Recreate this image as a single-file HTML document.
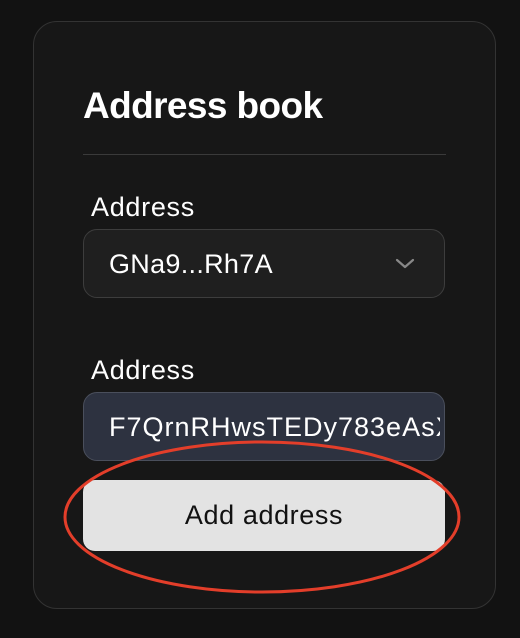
<!DOCTYPE html>
<html><head><style>
html,body{margin:0;padding:0;background:#121212;width:520px;height:638px;overflow:hidden;font-family:"Liberation Sans",sans-serif;}
.card{position:absolute;left:33px;top:21px;width:461px;height:586px;border:1.5px solid #333;border-radius:24px;background:#171717;}
.t{position:absolute;left:83px;top:84px;font-size:37px;font-weight:bold;color:#fff;letter-spacing:-0.6px;line-height:44px;}
.hr{position:absolute;left:83px;top:154px;width:363px;height:1px;background:#3a3a3a;}
.lab{position:absolute;left:91px;font-size:27px;letter-spacing:0.7px;color:#fff;line-height:30px;}
.box{position:absolute;left:83px;width:362px;height:69px;border-radius:14px;box-sizing:border-box;}
.sel{top:229px;background:#1f1f1f;border:1.5px solid #3d3d3d;}
.inp{top:392px;background:#2d3240;border:1.5px solid #4a4f5c;overflow:hidden;}
.txt{position:absolute;left:25px;top:19px;font-size:27px;letter-spacing:0.3px;color:#fff;line-height:30px;white-space:nowrap;}
.btn{position:absolute;left:83px;top:480px;width:362px;height:71px;background:#e3e3e3;border-radius:12px;font-size:27px;letter-spacing:0.6px;color:#111;text-align:center;line-height:71px;}
</style></head><body>
<div class="card"></div>
<div class="t">Address book</div>
<div class="hr"></div>
<div class="lab" style="top:192px">Address</div>
<div class="box sel"><div class="txt">GNa9...Rh7A</div>
<svg style="position:absolute;left:310px;top:27px" width="22" height="14" viewBox="0 0 22 14"><path d="M3 3 L11 10 L19 3" fill="none" stroke="#888" stroke-width="2.2" stroke-linecap="round" stroke-linejoin="round"/></svg></div>
<div class="lab" style="top:355px">Address</div>
<div class="box inp"><div class="txt" style="width:331px;overflow:hidden;letter-spacing:1px;">F7QrnRHwsTEDy783eAsXyz</div></div>
<div class="btn">Add address</div>
<svg style="position:absolute;left:0;top:0" width="520" height="638"><ellipse cx="262" cy="517" rx="197" ry="75" fill="none" stroke="#e33e2a" stroke-width="3"/></svg>
</body></html>
